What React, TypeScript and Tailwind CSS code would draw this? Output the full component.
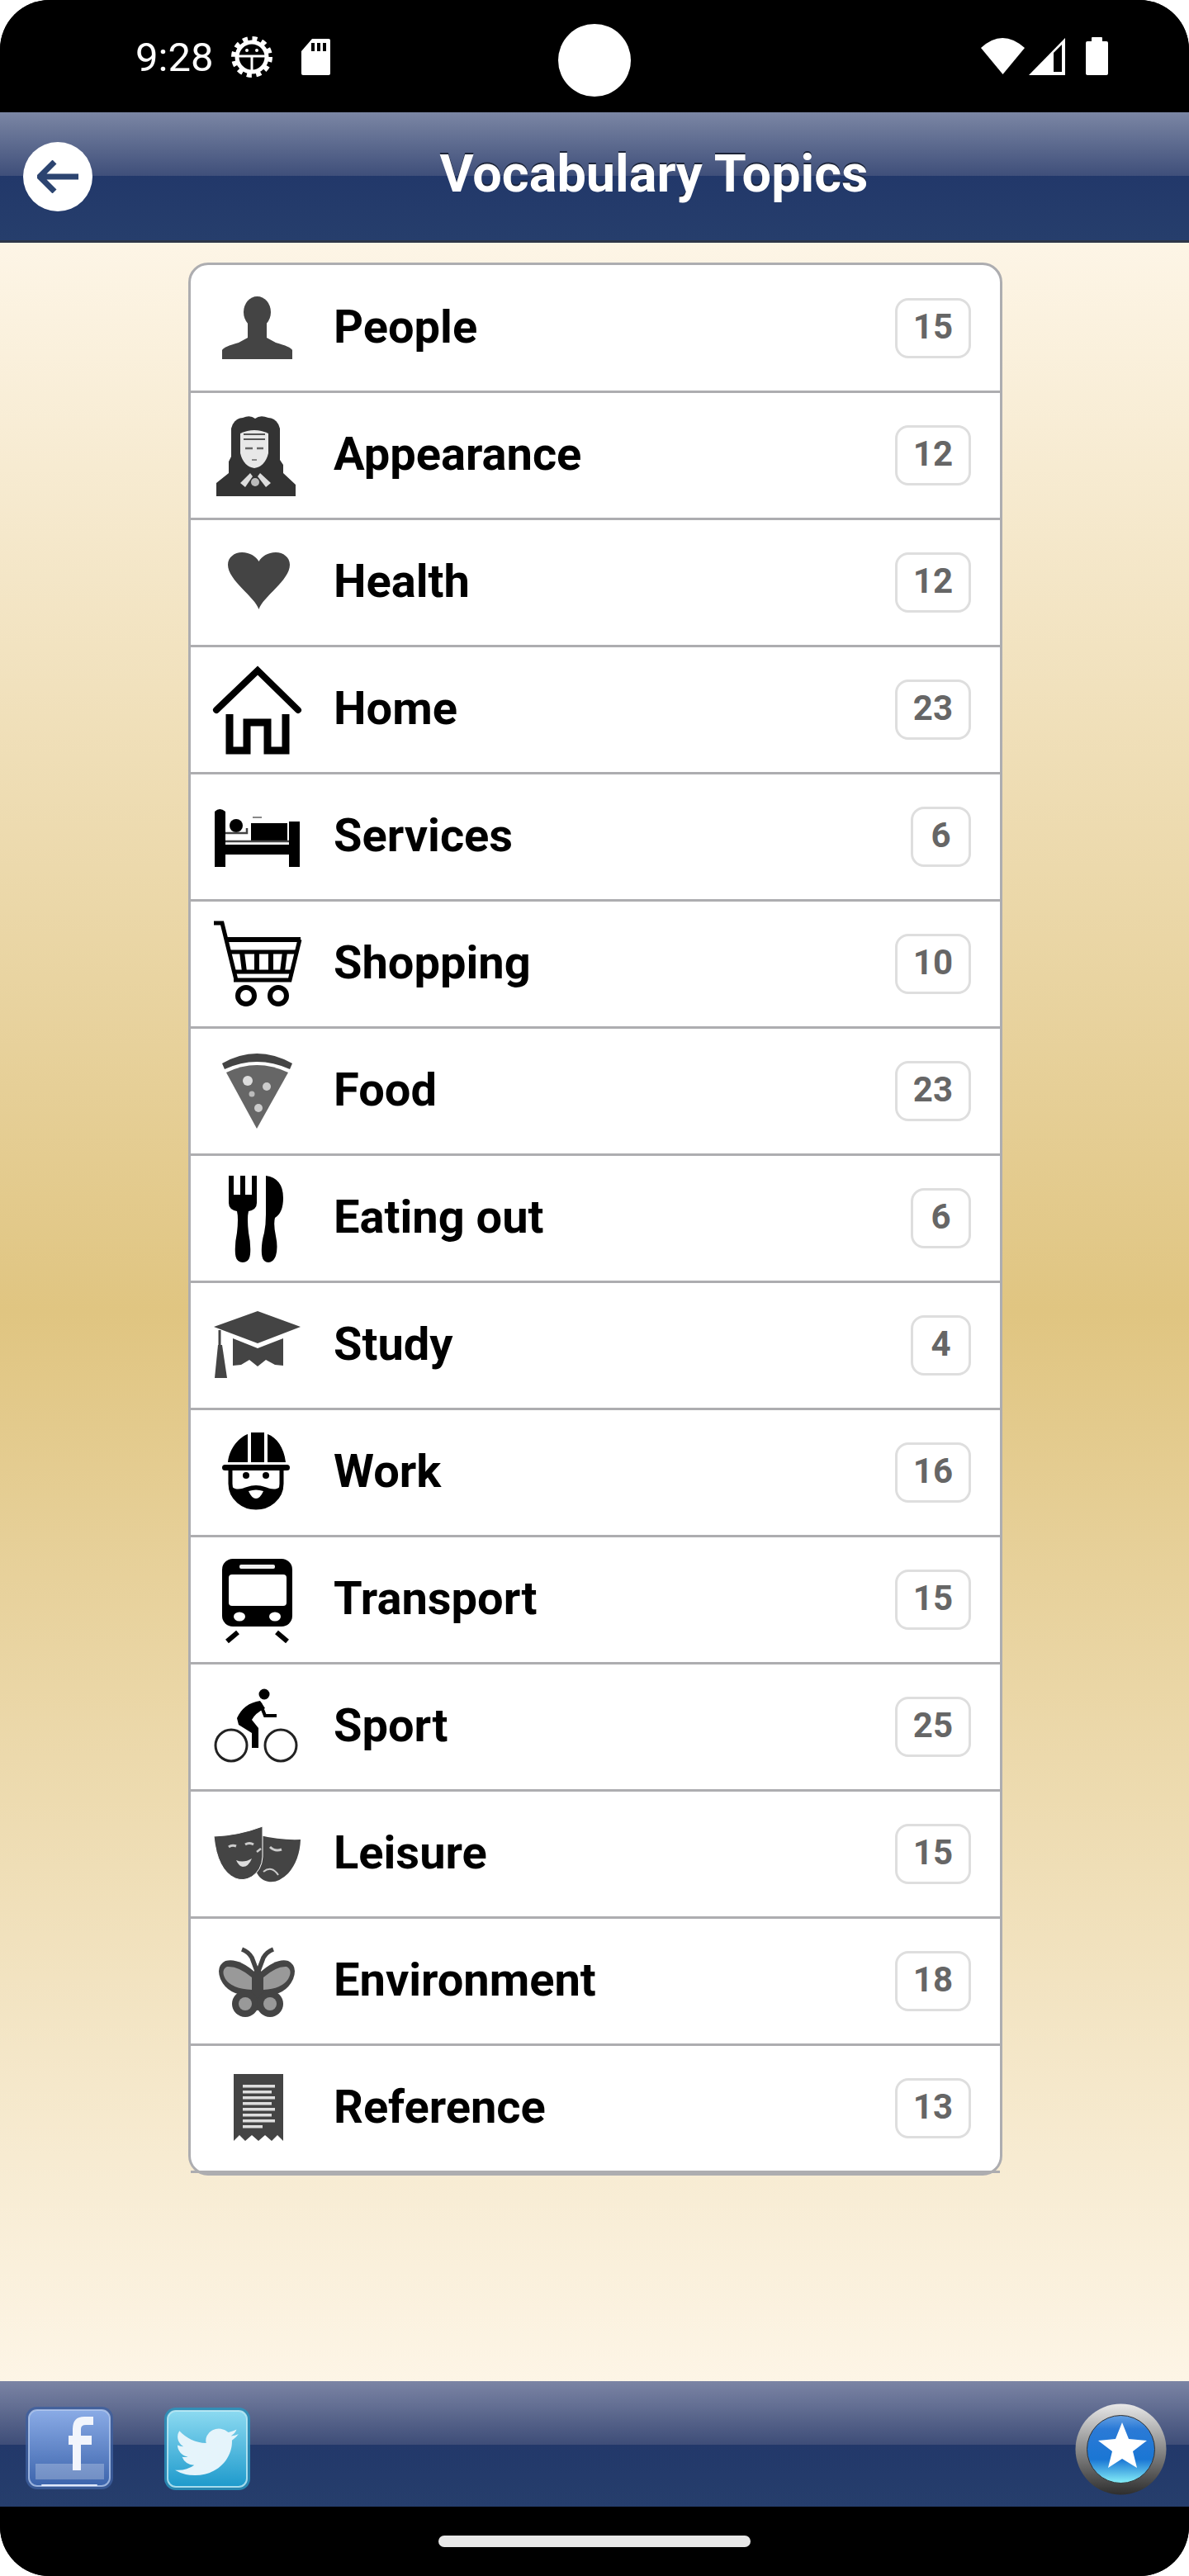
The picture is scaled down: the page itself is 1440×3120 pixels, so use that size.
import type { ReactNode } from "react";

function Glyph({ children }: { children: ReactNode }) {
  return (
    <svg width="105" height="105" viewBox="0 0 105 105" className="shrink-0 overflow-visible blur-[0.5px]">
      {children}
    </svg>
  );
}

const PersonIcon = () => (
  <Glyph>
    <ellipse cx="52.5" cy="33" rx="16.5" ry="19" fill="#444" />
    <path d="M10 90V79Q12 75 30 70L41 64V44H64V64L75 70Q93 75 95 79V90Z" fill="#444" />
  </Glyph>
);

const AppearanceIcon = () => (
  <Glyph>
    <path
      d="M21 20Q24 8 35 7Q44 3 50 8Q56 3 66 7Q77 8 80 20V58L84 64V74L99 88V102H3V86L18 74V60L21 54Z"
      fill="#333"
    />
    <path d="M32 26Q49 18 66 26V50Q62 66 49 68Q36 66 32 50Z" fill="#e8e8e8" />
    <path d="M36 27H62M36 33H62" stroke="#555" strokeWidth="2" />
    <path d="M38 44H47M52 44H60" stroke="#666" strokeWidth="2.5" />
    <path d="M46 58H52" stroke="#888" strokeWidth="2" />
    <path d="M32 86L44 74L47 78L38 91ZM69 86L56 74L53 78L63 91Z" fill="#ddd" />
    <circle cx="50" cy="85" r="5" fill="#bbb" />
  </Glyph>
);

const HeartIcon = () => (
  <Glyph>
    <path
      d="M54.5 85C50 70 17 50 17 31C17 22 25 16 34 16C44 16 51 21 54.5 27C58 21 65 16 75 16C84 16 92 22 92 31C92 50 59 70 54.5 85Z"
      fill="#444"
    />
  </Glyph>
);

const HomeIcon = () => (
  <Glyph>
    <path d="M3 53L53 5L102 53" fill="none" stroke="#000" strokeWidth="8" strokeLinecap="round" />
    <path d="M19 58V102H40V68H65V102H87V58" fill="none" stroke="#000" strokeWidth="9" />
  </Glyph>
);

const BedIcon = () => (
  <Glyph>
    <path d="M1 22Q7 16 14 22V89H1ZM91 34H104V89H91Z" fill="#000" />
    <rect x="14" y="62" width="77" height="12" fill="#000" />
    <circle cx="27" cy="39" r="8" fill="#000" />
    <rect x="45" y="36" width="44" height="22" fill="#000" />
    <path d="M14 48H40V42M14 58H91" stroke="#444" strokeWidth="2.5" fill="none" />
    <path d="M47 29H58" stroke="#888" strokeWidth="2" />
  </Glyph>
);

const CartIcon = () => (
  <Glyph>
    <path d="M0 3H10L27 72" fill="none" stroke="#000" strokeWidth="5" />
    <path d="M16 23H105" stroke="#000" strokeWidth="6" />
    <path d="M104 23L92 72H24" fill="none" stroke="#000" strokeWidth="5" />
    <path d="M20 38H99M24 62H94" stroke="#000" strokeWidth="5" />
    <path d="M34 38L37 62M52 38V62M69 38V62M86 38L83 62" stroke="#000" strokeWidth="6" />
    <circle cx="39" cy="91" r="10" fill="none" stroke="#000" strokeWidth="6" />
    <circle cx="78" cy="91" r="10" fill="none" stroke="#000" strokeWidth="6" />
  </Glyph>
);

const PizzaIcon = () => (
  <Glyph>
    <path d="M10 19Q52 -5 95 19L92 26Q52 8 13 26Z" fill="#444" />
    <path d="M15 30Q52 12 90 30L52 98Z" fill="#666" />
    <circle cx="41" cy="40" r="6" fill="#ddd" />
    <circle cx="64" cy="47" r="5" fill="#ccc" />
    <circle cx="46" cy="56" r="3.5" fill="#bbb" />
    <circle cx="54" cy="73" r="5" fill="#ccc" />
  </Glyph>
);

const CutleryIcon = () => (
  <Glyph>
    <path
      d="M18 1H24V24H32V1H38V24H46V1H52V34Q52 42 42 44Q40 52 42 70Q45 84 44 96Q43 106 35 106Q27 106 26 96Q25 84 28 70Q30 52 28 44Q18 42 18 34Z"
      fill="#000"
    />
    <path
      d="M63 1Q84 4 84 28Q84 46 74 52Q72 60 75 74Q78 88 75 98Q72 106 66 106Q59 106 58 96Q57 84 61 70Q63 60 63 48Z"
      fill="#000"
    />
  </Glyph>
);

const CapIcon = () => (
  <Glyph>
    <path d="M0 30L53 11L105 30L53 50Z" fill="#444" />
    <path d="M23 44L53 56L84 44V77L74 76L63 70L53 78L43 70L33 76L23 77Z" fill="#444" />
    <path d="M7 34V54" stroke="#444" strokeWidth="3" />
    <path d="M5 52H10L16 92H1Z" fill="#444" />
  </Glyph>
);

const WorkerIcon = () => (
  <Glyph>
    <path d="M17 40C19 22 31 10 41 6V40ZM45 4H61V40H45ZM65 6C76 10 85 22 87 40H65Z" fill="#000" />
    <rect x="10" y="43" width="82" height="7" rx="3.5" fill="#000" />
    <path d="M20 50V66C20 84 36 95 51 95C66 95 82 84 82 66V50" fill="none" stroke="#000" strokeWidth="5" />
    <circle cx="39" cy="56" r="4" fill="#000" />
    <circle cx="63" cy="56" r="4" fill="#000" />
    <path d="M20 66C24 76 34 72 40 70Q51 66 62 70C68 72 78 76 82 66C82 84 66 97 51 97C36 97 20 84 20 66Z" fill="#000" />
    <path d="M42 75Q51 72 60 75Q56 84 51 84Q46 84 42 75Z" fill="#fff" />
  </Glyph>
);

const TrainIcon = () => (
  <Glyph>
    <rect x="10" y="3" width="85" height="82" rx="13" fill="#000" />
    <rect x="18" y="22" width="70" height="38" rx="4" fill="#fff" />
    <rect x="31" y="10" width="43" height="5" rx="2" fill="#eee" />
    <ellipse cx="31" cy="73" rx="7" ry="5.5" fill="#fff" />
    <ellipse cx="74" cy="73" rx="7" ry="5.5" fill="#fff" />
    <path d="M16 103L29 92M89 103L76 92" stroke="#000" strokeWidth="6" />
  </Glyph>
);

const CyclistIcon = () => (
  <Glyph>
    <circle cx="21" cy="75" r="19" fill="none" stroke="#222" strokeWidth="3" />
    <circle cx="81" cy="75" r="19" fill="none" stroke="#222" strokeWidth="3" />
    <circle cx="61" cy="13" r="6.5" fill="#000" />
    <path d="M28 42Q36 24 56 21L62 30Q50 36 46 44L54 54V78H46V60L30 50Z" fill="#000" />
    <path d="M56 24L62 39H76" fill="none" stroke="#000" strokeWidth="4" />
  </Glyph>
);

const MasksIcon = () => (
  <Glyph>
    <path d="M56 30Q80 36 105 35Q104 60 90 76Q78 88 66 86Q54 84 50 70Z" fill="#444" />
    <path d="M0 31Q30 30 59 19V56Q58 72 46 80Q36 86 26 82Q4 72 0 31Z" fill="#444" stroke="#fff" strokeWidth="1" />
    <path d="M18 44Q22 41 27 43M38 41Q43 38 48 41" fill="none" stroke="#ccc" strokeWidth="3" />
    <path d="M27 60Q36 64 46 58Q42 68 35 68Q30 67 27 60Z" fill="#ddd" />
    <path d="M68 44Q74 50 82 47" fill="none" stroke="#ccc" strokeWidth="3" />
    <path d="M52 50L57 46" fill="none" stroke="#ccc" strokeWidth="2.5" />
    <path d="M60 74Q70 66 78 78" fill="none" stroke="#ccc" strokeWidth="2" />
  </Glyph>
);

const ButterflyIcon = () => (
  <Glyph>
    <path d="M52 40L46 24Q42 17 34 14M54 40L60 24Q64 17 72 14" fill="none" stroke="#444" strokeWidth="5.5" />
    <path d="M50 42Q30 24 14 28Q2 34 8 50Q18 72 50 70Z" fill="#444" />
    <path d="M56 42Q76 24 90 28Q102 34 96 50Q86 72 56 70Z" fill="#444" />
    <rect x="48" y="38" width="10" height="50" rx="5" fill="#444" />
    <circle cx="38" cy="80" r="16" fill="#444" />
    <circle cx="68" cy="80" r="16" fill="#444" />
    <path d="M46 48Q30 34 16 35Q8 39 14 50Q22 62 46 63Z" fill="#999" />
    <path d="M60 48Q76 34 88 35Q96 39 90 50Q82 62 60 63Z" fill="#999" />
    <circle cx="38" cy="80" r="8" fill="#999" />
    <circle cx="68" cy="80" r="8" fill="#999" />
  </Glyph>
);

const ReceiptIcon = () => (
  <Glyph>
    <path d="M24 11H84V92L77 85L70 92L62 85L54 92L46 85L38 92L31 85L24 92Z" fill="#444" />
    {[24, 31, 38, 45, 52, 59, 66].map((y, i) => (
      <rect key={y} x="35" y={y} width={i % 2 === 0 ? 39 : 35} height="3.5" fill="#ddd" />
    ))}
    <rect x="35" y="73" width="24" height="3.5" fill="#ddd" />
  </Glyph>
);

const topics = [
  { name: "People", count: 15, icon: <PersonIcon /> },
  { name: "Appearance", count: 12, icon: <AppearanceIcon /> },
  { name: "Health", count: 12, icon: <HeartIcon /> },
  { name: "Home", count: 23, icon: <HomeIcon /> },
  { name: "Services", count: 6, icon: <BedIcon /> },
  { name: "Shopping", count: 10, icon: <CartIcon /> },
  { name: "Food", count: 23, icon: <PizzaIcon /> },
  { name: "Eating out", count: 6, icon: <CutleryIcon /> },
  { name: "Study", count: 4, icon: <CapIcon /> },
  { name: "Work", count: 16, icon: <WorkerIcon /> },
  { name: "Transport", count: 15, icon: <TrainIcon /> },
  { name: "Sport", count: 25, icon: <CyclistIcon /> },
  { name: "Leisure", count: 15, icon: <MasksIcon /> },
  { name: "Environment", count: 18, icon: <ButterflyIcon /> },
  { name: "Reference", count: 13, icon: <ReceiptIcon /> },
];

function StatusBar() {
  return (
    <div className="relative flex h-[136px] shrink-0 items-center bg-black text-white">
      <div className="ml-[164px] flex items-center pt-[2px]">
        <span className="text-[49px] leading-none">9:28</span>
        <svg width="50" height="50" viewBox="0 0 50 50" className="ml-[22px]">
          <circle cx="25" cy="25" r="18" fill="none" stroke="#fff" strokeWidth="5" />
          <circle cx="25" cy="25" r="22" fill="none" stroke="#fff" strokeWidth="6" strokeDasharray="6 5.5" />
          <path d="M8 24H42M25 24V44" stroke="#fff" strokeWidth="3" />
          <circle cx="19" cy="17" r="2" fill="#fff" />
          <circle cx="31" cy="17" r="2" fill="#fff" />
        </svg>
        <svg width="35" height="44" viewBox="0 0 35 44" className="ml-[35px]">
          <path d="M13 0H33Q35 0 35 2V42Q35 44 33 44H2Q0 44 0 42V15Z" fill="#fff" />
          <path d="M12 5H16V15H12ZM19 5H23V15H19ZM26 5H30V15H26Z" fill="#000" />
        </svg>
      </div>
      <div className="absolute left-[676px] top-[29px] size-[88px] rounded-full bg-white" />
      <div className="ml-auto mr-[98px] flex items-center">
        <svg width="53" height="44" viewBox="0 0 53 44">
          <path d="M0 12Q26 -12 53 12L26.5 44Z" fill="#fff" />
        </svg>
        <svg width="44" height="45" viewBox="0 0 44 45" className="ml-[5px]">
          <path d="M0 45L44 0V45Z" fill="#fff" />
          <path d="M30 18L40 8V41H30Z" fill="#000" />
        </svg>
        <svg width="27" height="46" viewBox="0 0 27 46" className="ml-[25px]">
          <path d="M7 5V1Q7 0 8 0H19Q20 0 20 1V5H25Q27 5 27 7V44Q27 46 25 46H2Q0 46 0 44V7Q0 5 2 5Z" fill="#fff" />
        </svg>
      </div>
    </div>
  );
}

function Header() {
  return (
    <header className="flex h-[158px] shrink-0 items-center border-b-[3px] border-[#2e3648] bg-[linear-gradient(#7b86a4_0,#3f4f7a_77px,#22386a_77px,#263e6c_100%)]">
      <div className="ml-[28px] flex size-[84px] items-center justify-center rounded-full bg-white blur-[0.5px]">
        <svg width="50" height="40" viewBox="0 0 50 40">
          <path d="M21 2L3 20L21 38M3 20H50" fill="none" stroke="#2c4470" strokeWidth="7" />
        </svg>
      </div>
      <h1 className="flex-1 pb-[6px] pl-[32px] text-center text-[63px] leading-none font-bold text-white [text-shadow:0_-2px_0_#1c2438]">
        Vocabulary Topics
      </h1>
    </header>
  );
}

function TopicRow({ name, count, icon }: { name: string; count: number; icon: ReactNode }) {
  return (
    <div className="flex h-[154px] items-center border-b-[3px] border-[#adadb0]">
      <div className="ml-[28px] flex w-[105px] justify-center">{icon}</div>
      <span className="ml-[40px] pb-[3px] text-[56px] leading-none font-bold text-black">{name}</span>
      <span className="mr-[35px] ml-auto flex h-[73px] min-w-[73px] items-center justify-center rounded-[16px] border-[3px] border-[#dedede] bg-white px-[19px] pb-[3px] text-[42px] leading-none font-bold text-[#666]">
        {count}
      </span>
    </div>
  );
}

function Footer() {
  return (
    <footer className="flex h-[152px] shrink-0 items-center bg-[linear-gradient(#7b84a4_0,#3e4d78_77px,#22386a_77px,#263e6c_100%)] pt-[12px]">
      <svg width="108" height="104" viewBox="0 0 108 104" className="ml-[30px] blur-[0.6px]">
        <defs>
          <linearGradient id="fbFill" x1="0" y1="0" x2="0" y2="1">
            <stop offset="0" stopColor="#8aabe6" />
            <stop offset="1" stopColor="#3c64ac" />
          </linearGradient>
        </defs>
        <rect x="1" y="1" width="106" height="100" rx="14" fill="#3d5f9f" fillOpacity="0.8" />
        <rect x="5" y="5" width="98" height="92" rx="10" fill="url(#fbFill)" stroke="#b9cdf0" strokeOpacity="0.75" strokeWidth="2" />
        <rect x="13" y="70" width="83" height="19" fill="#fff" fillOpacity="0.25" />
        <path d="M58 78H68V47H81V36H68V28Q68 23 74 23H83V13H72Q58 13 58 28V36H53V47H58Z" fill="#f2f5fc" />
        <rect x="20" y="95" width="68" height="2" rx="1" fill="#e0e9fa" />
      </svg>
      <svg width="106" height="102" viewBox="0 0 106 102" className="ml-[60px] blur-[0.6px]">
        <defs>
          <linearGradient id="twFill" x1="0" y1="0" x2="0" y2="1">
            <stop offset="0" stopColor="#8cdaf1" />
            <stop offset="1" stopColor="#1e9acc" />
          </linearGradient>
        </defs>
        <rect x="1" y="1" width="104" height="100" rx="14" fill="#2a94bd" fillOpacity="0.85" />
        <rect x="5" y="5" width="96" height="92" rx="10" fill="url(#twFill)" stroke="#c4edf8" strokeOpacity="0.8" strokeWidth="2" />
        <g transform="translate(14 20) scale(3.2 2.9)">
          <path
            d="M23.953 4.57a10 10 0 01-2.825.775 4.958 4.958 0 002.163-2.723c-.951.555-2.005.959-3.127 1.184a4.92 4.92 0 00-8.384 4.482C7.69 8.095 4.067 6.13 1.64 3.162a4.822 4.822 0 00-.666 2.475c0 1.71.87 3.213 2.188 4.096a4.904 4.904 0 01-2.228-.616v.06a4.923 4.923 0 003.946 4.827 4.996 4.996 0 01-2.212.085 4.936 4.936 0 004.604 3.417 9.867 9.867 0 01-6.102 2.105c-.39 0-.779-.023-1.17-.067a13.995 13.995 0 007.557 2.209c9.053 0 13.998-7.496 13.998-13.985 0-.21 0-.42-.015-.63A9.935 9.935 0 0024 4.59z"
            fill="#e5f4fb"
          />
        </g>
      </svg>
      <svg width="111" height="111" viewBox="0 0 111 111" className="mr-[27px] ml-auto blur-[0.5px]">
        <defs>
          <linearGradient id="ringFill" x1="0" y1="0" x2="0" y2="1">
            <stop offset="0" stopColor="#e8e8e8" />
            <stop offset="0.5" stopColor="#8a8a8a" />
            <stop offset="1" stopColor="#2e2e2e" />
          </linearGradient>
          <linearGradient id="discFill" x1="0" y1="0" x2="0" y2="1">
            <stop offset="0" stopColor="#63a0e4" />
            <stop offset="0.2" stopColor="#2b7ad6" />
            <stop offset="0.65" stopColor="#1a76d4" />
            <stop offset="1" stopColor="#86f0f8" />
          </linearGradient>
        </defs>
        <circle cx="55.5" cy="55.5" r="55" fill="url(#ringFill)" />
        <circle cx="55.5" cy="55.5" r="41" fill="url(#discFill)" stroke="#333" strokeWidth="1" />
        <path d="M57 23L65 43L87 45L70 58L75 78L57 67L40 78L45 58L28 45L49 43Z" fill="#fff" />
      </svg>
    </footer>
  );
}

export default function App() {
  return (
    <div className="h-[3120px] w-[1440px] bg-white font-[family-name:Roboto,sans-serif]">
      <div className="flex h-full flex-col overflow-hidden rounded-[60px] bg-black">
        <StatusBar />
        <Header />
        <main className="flex-1 bg-linear-to-b from-[#fdf5e6] via-[#e0c581] to-[#fdf5e6] pt-[24px]">
          <div className="ml-[228px] w-[986px] rounded-[24px] border-[3px] border-[#adadb0] bg-white pt-px">
            {topics.map((t) => (
              <TopicRow key={t.name} name={t.name} count={t.count} icon={t.icon} />
            ))}
          </div>
        </main>
        <Footer />
        <div className="flex h-[84px] shrink-0 items-center justify-center bg-black">
          <div className="h-[14px] w-[378px] rounded-[7px] bg-[#e8e8e8]" />
        </div>
      </div>
    </div>
  );
}
